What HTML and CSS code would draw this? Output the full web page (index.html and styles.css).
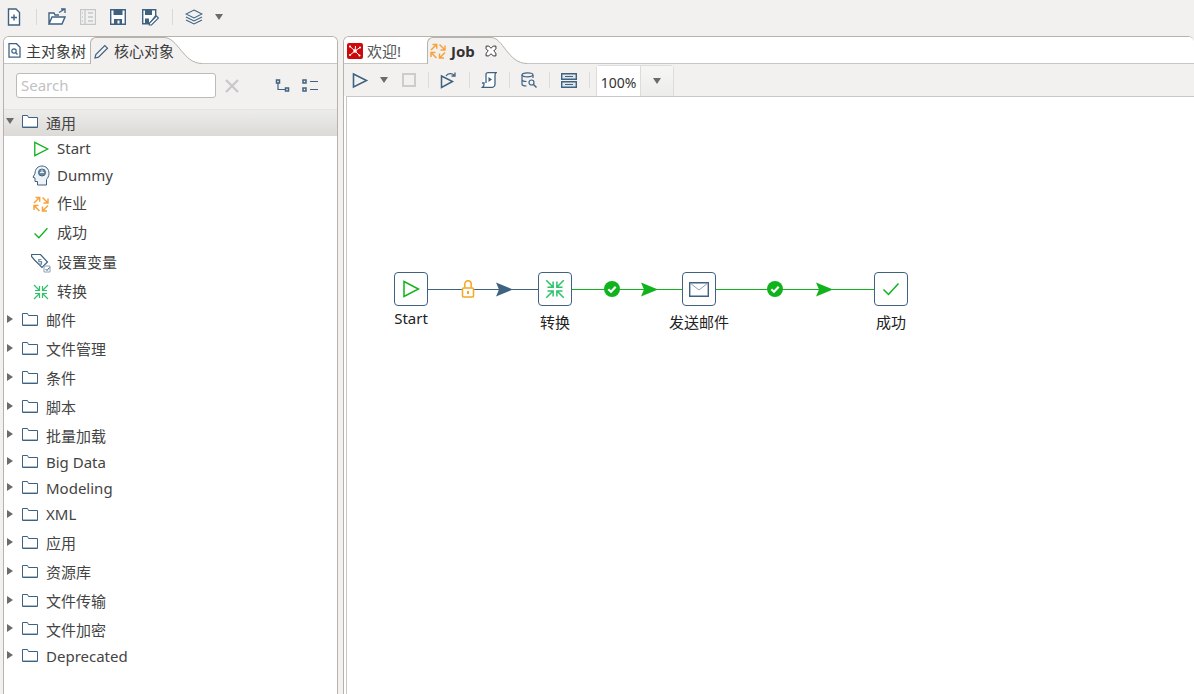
FILE: index.html
```html
<!DOCTYPE html>
<html lang="zh">
<head>
<meta charset="utf-8">
<title>Job</title>
<link rel="stylesheet" href="styles.css">
</head>
<body>
<svg class="defs" width="0" height="0">
  <defs>
    <symbol id="folder" viewBox="0 0 16 14"><path d="M.5 1.500h5l1 2h9v10H.5z" fill="#fff" stroke="#3f6281"/><path d="M1 12.500h14" stroke="#a9bdcd"/></symbol>
    <symbol id="open" viewBox="0 0 10 10"><path d="M1 2h8L5 8z" fill="#6b6b6b"/></symbol>
    <symbol id="closed" viewBox="0 0 10 10"><path d="M2 1v8l6-4z" fill="#6b6b6b"/></symbol>
    <symbol id="arrows" viewBox="0 0 16 16"><g fill="none" stroke="currentColor" stroke-width="1.500"><path d="M1 7l5-5M2.500 1.500h4.200v4.200"/><path d="M9.500 1.500l5 5M15 2.500v4.500h-4.500"/><path d="M15 9.500l-5 5M14 15H9.500v-4.500"/><path d="M6.500 15l-5-5M1 14V9.500h4.500"/></g></symbol>
    <symbol id="compress" viewBox="0 0 16 16"><g fill="none" stroke="currentColor" stroke-width="1.200"><path d="M1 1l5 5M6.500 2v4.500H2"/><path d="M15 1l-5 5M9.500 2v4.500H14"/><path d="M1 15l5-5M6.500 14V9.500H2"/><path d="M15 15l-5-5M9.500 14V9.500H14"/></g></symbol>
    <symbol id="play" viewBox="0 0 18 18"><path d="M2 1.500l14.500 7.500L2 16.500z" fill="none" stroke="currentColor" stroke-width="1.500"/></symbol>
    <symbol id="check" viewBox="0 0 18 14"><path d="M1.500 7.500l5 5L16.500 1.500" fill="none" stroke="currentColor" stroke-width="1.500"/></symbol>
    <symbol id="okdot" viewBox="0 0 16 16"><circle cx="8" cy="8" r="8" fill="#10b31c"/><path d="M4.300 8.200l2.700 2.600 4.700-5" fill="none" stroke="#fff" stroke-width="2.200"/></symbol>
  </defs>
</svg>

<header class="topbar">
  <svg class="ti" viewBox="0 0 18 20" width="18" height="20"><path d="M3.500 2h7.500l3.500 3.500V18h-11z" fill="#fff" stroke="#3f6281" stroke-width="1.400"/><path d="M9 7.500v6M6 10.500h6" stroke="#3f6281" stroke-width="1.400"/></svg>
  <span class="sep"></span>
  <svg class="ti gap-a" viewBox="0 0 18 18" width="18" height="18"><path d="M1 16V5h5l1 2h4M1 16l3-7h13l-3 7z" fill="#fff" stroke="#3f6281" stroke-width="1.400"/><path d="M11 4.500l5-3M13 1h4v4" fill="none" stroke="#3f6281" stroke-width="1.300"/></svg>
  <svg class="ti gap-b" viewBox="0 0 16 16" width="16" height="16"><path d="M.5.500h15v15H.5zM5 .5v15M8 4h5M8 8h5M8 12h5M2 4h1M2 8h1M2 12h1" fill="none" stroke="#c4c7c9" stroke-width="1.300"/></svg>
  <svg class="ti gap-b" viewBox="0 0 16 16" width="16" height="16"><path d="M.7.700h14.600v14.600H.7z" fill="#fff" stroke="#3f6281" stroke-width="1.400"/><path d="M3.500 1h9v5h-9zM4 10h8v5H4z" fill="#3f6281"/><path d="M7.500 11.500h2v3h-2z" fill="#fff"/></svg>
  <svg class="ti gap-c" viewBox="0 0 18 18" width="18" height="18"><path d="M1.700 1.700h13v6l-6 8h-7z" fill="#fff" stroke="#3f6281" stroke-width="1.400"/><path d="M4 2h7v5H4zM4 10.500h4v5H4z" fill="#3f6281"/><path d="M8.500 15l7-7 2 2-7 7h-2.200z" fill="#fff" stroke="#3f6281" stroke-width="1.200"/></svg>
  <span class="sep sep-b"></span>
  <svg class="ti gap-d" viewBox="0 0 18 16" width="18" height="16"><path d="M9 1l8 4-8 4-8-4z" fill="none" stroke="#3f6281" stroke-width="1.100"/><path d="M1 8l8 4 8-4M1 11l8 4 8-4" fill="none" stroke="#3f6281" stroke-width="1.100"/></svg>
  <svg class="menu-caret" width="10" height="10"><use href="#open"/></svg>
</header>

<main class="workspace">
  <section class="panel left">
    <div class="tabs">
      <div class="tab plain t-main">
        <svg width="13" height="15" viewBox="0 0 13 15"><path d="M1 .7h7.500l3.500 3.500v10H1z" fill="#fff" stroke="#3f6281" stroke-width="1.300"/><circle cx="6" cy="8" r="2.200" fill="none" stroke="#3f6281" stroke-width="1.200"/><path d="M7.500 9.500l2 2" stroke="#3f6281" stroke-width="1.200"/></svg>
        <span>主对象树</span>
      </div>
      <div class="tab active t-core">
        <svg width="15" height="15" viewBox="0 0 15 15"><path d="M1 14l.8-3.500L10.800 1.500l2.700 2.700-9 9z" fill="none" stroke="#3f6281" stroke-width="1.200"/></svg>
        <span>核心对象</span>
      </div>
      <svg class="curve" width="38" height="27" viewBox="0 0 38 27"><path d="M0 0C14 0 20 26 37 26H38V27H0z" fill="#f2f1f0"/><path d="M0 .5C14 .5 19 26.500 38 26.500" fill="none" stroke="#b5b3ac"/></svg>
    </div>
    <div class="search-row">
      <div class="search">Search</div>
      <svg class="clear" width="14" height="14" viewBox="0 0 14 14"><path d="M1 1l12 12M13 1L1 13" stroke="#c8c8c8" stroke-width="2.200"/></svg>
      <svg class="s1" width="15" height="14" viewBox="0 0 15 14"><path d="M1.500 1h3v3h-3zM10.500 9h3v3h-3z" fill="none" stroke="#3f6281" stroke-width="1.500"/><path d="M3 4v6.500h7" fill="none" stroke="#3f6281" stroke-width="1.200"/></svg>
      <svg class="s2" width="16" height="14" viewBox="0 0 16 14"><path d="M1 1h3v3H1zM1 9h3v3H1z" fill="none" stroke="#3f6281" stroke-width="1.500"/><path d="M8 2.500h8M8 10.500h8" stroke="#3f6281" stroke-width="1.200"/></svg>
    </div>
    <ul class="tree">
      <li class="node selected h26"><svg class="tw" width="10" height="10"><use href="#open"/></svg><svg class="fd" width="16" height="14"><use href="#folder"/></svg><span>通用</span></li>
      <li class="leaf h26"><svg class="li green" width="16" height="16"><use href="#play"/></svg><span>Start</span></li>
      <li class="leaf h27"><svg class="li" width="18" height="21" viewBox="0 0 18 21"><path d="M5.500 20v-3.500H3v-3.500l-2-.8L3 8.500C3 4 6 1 10 1c4 0 7 3 7 7.500 0 3-1.500 4.500-2.500 6V20z" fill="#eef3f7" stroke="#3f6281"/><circle cx="10" cy="7.500" r="3.500" fill="#6f8ba3" stroke="#3f6281"/><path d="M8 7.500h4M10 4.500v3" stroke="#eef3f7"/></svg><span>Dummy</span></li>
      <li class="leaf h29"><svg class="li orange" width="16" height="16"><use href="#arrows"/></svg><span>作业</span></li>
      <li class="leaf h30"><svg class="li green" width="16" height="12"><use href="#check"/></svg><span>成功</span></li>
      <li class="leaf h29"><svg class="li wide" width="20" height="20" viewBox="0 0 20 20"><path d="M.7 1.500h8.800l7 7.500-5.500 5.500-7.500-7.500-3-3.500z" fill="#fff" stroke="#3f6281" stroke-width="1.200"/><path d="M10.500 6.500H7.800v2.200h2.700v2.500H7.500" fill="none" stroke="#6f8ba3" stroke-width="1.200"/><path d="M13 13h6v6h-6z" fill="#fff" stroke="#8aa2b5"/><path d="M14.500 16l1.500 1.500 2.500-3" fill="none" stroke="#3f6281"/></svg><span>设置变量</span></li>
      <li class="leaf h29"><svg class="li mint" width="16" height="16"><use href="#compress"/></svg><span>转换</span></li>
      <li class="node h29"><svg class="tw" width="10" height="10"><use href="#closed"/></svg><svg class="fd" width="16" height="14"><use href="#folder"/></svg><span>邮件</span></li>
      <li class="node h29"><svg class="tw" width="10" height="10"><use href="#closed"/></svg><svg class="fd" width="16" height="14"><use href="#folder"/></svg><span>文件管理</span></li>
      <li class="node h29"><svg class="tw" width="10" height="10"><use href="#closed"/></svg><svg class="fd" width="16" height="14"><use href="#folder"/></svg><span>条件</span></li>
      <li class="node h29"><svg class="tw" width="10" height="10"><use href="#closed"/></svg><svg class="fd" width="16" height="14"><use href="#folder"/></svg><span>脚本</span></li>
      <li class="node h28"><svg class="tw" width="10" height="10"><use href="#closed"/></svg><svg class="fd" width="16" height="14"><use href="#folder"/></svg><span>批量加载</span></li>
      <li class="node lat h26"><svg class="tw" width="10" height="10"><use href="#closed"/></svg><svg class="fd" width="16" height="14"><use href="#folder"/></svg><span>Big Data</span></li>
      <li class="node lat h26"><svg class="tw" width="10" height="10"><use href="#closed"/></svg><svg class="fd" width="16" height="14"><use href="#folder"/></svg><span>Modeling</span></li>
      <li class="node lat h27"><svg class="tw" width="10" height="10"><use href="#closed"/></svg><svg class="fd" width="16" height="14"><use href="#folder"/></svg><span>XML</span></li>
      <li class="node h29"><svg class="tw" width="10" height="10"><use href="#closed"/></svg><svg class="fd" width="16" height="14"><use href="#folder"/></svg><span>应用</span></li>
      <li class="node h29"><svg class="tw" width="10" height="10"><use href="#closed"/></svg><svg class="fd" width="16" height="14"><use href="#folder"/></svg><span>资源库</span></li>
      <li class="node h29"><svg class="tw" width="10" height="10"><use href="#closed"/></svg><svg class="fd" width="16" height="14"><use href="#folder"/></svg><span>文件传输</span></li>
      <li class="node h28"><svg class="tw" width="10" height="10"><use href="#closed"/></svg><svg class="fd" width="16" height="14"><use href="#folder"/></svg><span>文件加密</span></li>
      <li class="node lat h26"><svg class="tw" width="10" height="10"><use href="#closed"/></svg><svg class="fd" width="16" height="14"><use href="#folder"/></svg><span>Deprecated</span></li>
    </ul>
  </section>

  <section class="panel right">
    <div class="tabs">
      <div class="tab plain t-welcome">
        <svg width="16" height="16" viewBox="0 0 16 16"><rect width="16" height="16" rx="2" fill="#cc0a0a"/><path d="M8 8L3 3.500M8 8l5-3.500M8 8l-5 4M8 8l4.500 4.500M8 8l.5-5" stroke="#fff" stroke-width="1"/><circle cx="8" cy="8" r="1.800" fill="#fff"/><circle cx="3" cy="3.500" r="1" fill="#fff"/><circle cx="13" cy="4.500" r="1" fill="#fff"/><circle cx="3" cy="12" r="1" fill="#fff"/><circle cx="12.500" cy="12.500" r="1" fill="#fff"/></svg>
        <span>欢迎!</span>
      </div>
      <div class="tab active t-job">
        <svg class="orange" width="16" height="16"><use href="#arrows"/></svg>
        <b>Job</b>
        <svg class="close" width="12" height="12" viewBox="0 0 11 11"><path d="M1 1h2.500l2 2 2-2H10v2.500l-2 2 2 2V10H7.500l-2-2-2 2H1V7.500l2-2-2-2z" fill="#fff" stroke="#333" stroke-width=".9"/></svg>
      </div>
      <svg class="curve" width="36" height="27" viewBox="0 0 36 27"><path d="M0 0C12 0 18 26 35 26H36V27H0z" fill="#f2f1f0"/><path d="M0 .5C12 .5 17 26.500 36 26.500" fill="none" stroke="#b5b3ac"/></svg>
    </div>
    <div class="job-tools">
      <svg class="jt play" width="17" height="17" viewBox="0 0 17 17"><path d="M1.500 2l13 6.500-13 6.500z" fill="none" stroke="#3f6281" stroke-width="1.600"/></svg>
      <svg class="jt caret" width="10" height="10"><use href="#open"/></svg>
      <span class="stop"></span>
      <span class="jsep"></span>
      <svg class="jt" width="17" height="17" viewBox="0 0 17 17"><path d="M1.500 4l11 5.500-11 6z" fill="none" stroke="#3f6281" stroke-width="1.500"/><path d="M6 4c2-3 6-3 8-1M15 .5V4h-3.500" fill="none" stroke="#3f6281" stroke-width="1.300"/></svg>
      <span class="jsep"></span>
      <svg class="jt" width="16" height="16" viewBox="0 0 16 16"><path d="M5 2.500C5 1 6 .7 7 .7h8c-1 .8-1 1.500-1 2.800V12c0 2-1.500 3.300-2.500 3.300H1.500c1-.8 1.500-1.500 1.500-2.800V11H1M5 2.500V11" fill="#fff" stroke="#3f6281" stroke-width="1.300"/><path d="M7.500 5l3.500 2.500-3.500 2.500z" fill="#3f6281"/></svg>
      <span class="jsep"></span>
      <svg class="jt" width="16" height="16" viewBox="0 0 16 16"><ellipse cx="6.500" cy="2.800" rx="5.500" ry="2" fill="none" stroke="#3f6281" stroke-width="1.200"/><path d="M1 3v9c0 1 2 2 4.500 2M12 3v3M1 7.500c0 1 2 2 4.500 2" fill="none" stroke="#3f6281" stroke-width="1.200"/><circle cx="10.500" cy="10.500" r="2.500" fill="none" stroke="#3f6281" stroke-width="1.200"/><path d="M12.500 12.500l3 3" stroke="#3f6281" stroke-width="1.400"/></svg>
      <span class="jsep"></span>
      <svg class="jt" width="16" height="15" viewBox="0 0 16 15"><path d="M.7.700h14.600v5.600H.7zM.7 8.700h14.600v5.600H.7z" fill="#dfe7ed" stroke="#3f6281" stroke-width="1.400"/><path d="M4 3.500h8M4 11.500h8" stroke="#3f6281" stroke-width="1.200"/></svg>
      <span class="jsep jsep-z"></span>
      <div class="zoom-box"><span class="zoom-val">100%</span><span class="zoom-btn"><svg width="10" height="10"><use href="#open"/></svg></span></div>
    </div>
    <div class="canvas">
      <svg class="links" width="848" height="597" viewBox="0 0 848 597">
        <path d="M82 192.500H192" stroke="#3f6281" stroke-width="1.200"/>
        <path d="M150 185.500l17 7-17 7 3-7z" fill="#3f6281"/>
        <path d="M226 192.500H336M370 192.500H528" stroke="#10b31c" stroke-width="1.200"/>
        <path d="M295 185.500l17 7-17 7 3-7zM470 185.500l17 7-17 7 3-7z" fill="#10b31c"/>
        <rect x="116.500" y="191" width="11" height="9" rx="1" fill="#fff" stroke="#f5a623" stroke-width="1.500"/>
        <path d="M118.800 190.500V187a3.200 3.200 0 0 1 6.400 0v3.500" fill="none" stroke="#f5a623" stroke-width="1.500"/>
        <path d="M121 194h2v3h-2z" fill="#f5a623"/>
      </svg>
      <svg class="ok ok1" width="16" height="16"><use href="#okdot"/></svg>
      <svg class="ok ok2" width="16" height="16"><use href="#okdot"/></svg>

      <div class="job-node n-start"><div class="box"><svg class="green" width="18" height="18"><use href="#play"/></svg></div><label>Start</label></div>
      <div class="job-node n-conv"><div class="box"><svg class="mint" width="20" height="20"><use href="#compress"/></svg></div><label>转换</label></div>
      <div class="job-node n-mail"><div class="box"><svg width="20" height="15" viewBox="0 0 20 15"><path d="M.7.700h18.600v13.600H.7z" fill="#fff" stroke="#3f6281" stroke-width="1.400"/><path d="M1 1l9 7 9-7" fill="none" stroke="#8aa2b5"/></svg></div><label>发送邮件</label></div>
      <div class="job-node n-ok"><div class="box"><svg class="green" width="18" height="14"><use href="#check"/></svg></div><label>成功</label></div>
    </div>
  </section>
</main>
</body>
</html>
```
FILE: styles.css
```css
* { box-sizing: border-box; }
html, body { margin: 0; height: 100%; overflow: hidden; }
body {
  width: 1194px; height: 694px; background: #f2f1f0; color: #3c3c3c;
  font: 15px/1.2 "Noto Sans", "Noto Sans CJK SC", sans-serif;
  display: flex; flex-direction: column;
}
.defs { position: absolute; }
svg { display: block; flex: none; }
.green { color: #10b31c; }
.orange { color: #f5a33b; }
.mint { color: #2bc26a; }

.topbar { height: 36px; display: flex; align-items: center; padding: 0 0 3px 5px; flex: none; }
.sep { width: 1px; height: 16px; background: #d8d8d8; margin-left: 13px; }
.sep-b { margin-left: 13px; }
.gap-a { margin-left: 11px; }
.gap-b { margin-left: 14px; }
.gap-c { margin-left: 15px; }
.gap-d { margin-left: 12px; }
.menu-caret { margin-left: 11px; }

.workspace { flex: 1; display: flex; min-height: 0; padding-left: 3px; }
.panel { border: 1px solid #b5b3ac; border-bottom: 0; border-radius: 6px 6px 0 0; background: #fff; display: flex; flex-direction: column; overflow: hidden; }
.left { width: 335px; }
.right { width: 851px; margin-left: 5px; border-right: 0; }

.tabs { height: 27px; display: flex; align-items: stretch; flex: none; background: #fff; position: relative; box-shadow: inset 0 -1px 0 #c8c6c0; }
.tab { display: flex; align-items: center; gap: 5px; }
.tab.active { background: #f2f1f0; border-left: 1px solid #b5b3ac; border-top: 1px solid #b5b3ac; border-radius: 6px 0 0 0; }
.tab span, .tab b { font-size: 15px; white-space: nowrap; position: relative; z-index: 1; }
.t-main { width: 86px; padding-left: 4px; }
.t-core { width: 74px; padding-left: 3px; gap: 5px; }
.t-welcome { width: 83px; padding-left: 3px; gap: 4px; color: #555; }
.t-job { width: 64px; padding-left: 2px; gap: 5px; }
.t-job b { color: #333; }
.close { margin-left: 5px; position: relative; z-index: 1; }

.search-row { height: 46px; display: flex; align-items: center; padding: 0 0 2px 12px; background: #f2f1f0; border-bottom: 1px solid #e4e3e0; flex: none; }
.search { width: 200px; height: 25px; border: 1px solid #bdbbb5; border-radius: 3px; background: #fff; color: #c2c2c2; font-size: 15px; line-height: 23px; padding-left: 4px; }
.clear { margin-left: 9px; }
.s1 { margin-left: 36px; }
.s2 { margin-left: 12px; }

.tree { list-style: none; margin: 0; padding: 0; flex: 1; background: #fff; }
.tree li { display: flex; align-items: center; white-space: nowrap; color: #444; font-size: 15px; }
.h26 { height: 26px; } .h27 { height: 27px; } .h28 { height: 28px; } .h29 { height: 29px; } .h30 { height: 30px; }
.selected { background: linear-gradient(#ececea, #dcdad7); }
.node { padding-left: 1px; }
.tw { margin-bottom: 4px; }
.fd { margin-left: 7px; margin-bottom: 4px; }
.node span { margin-left: 8px; padding-bottom: 1px; }
.node.lat span { padding-bottom: 3px; }
.leaf { padding-left: 27px; position: relative; }
.leaf .li { width: 20px; }
.leaf span { position: absolute; left: 53px; top: 50%; transform: translateY(calc(-50% - 1.5px)); }

.job-tools { height: 32px; display: flex; align-items: center; padding-left: 8px; background: #f2f1f0; flex: none; }
.jt.caret { margin-left: 10px; }
.stop { width: 14px; height: 14px; border: 2px solid #cccccc; margin-left: 13px; flex: none; }
.jsep { width: 1px; height: 16px; background: #dcdcdc; margin: 0 11px 0 12px; flex: none; }
.jsep-z { margin-right: 6px; }
.zoom-box { width: 78px; height: 32px; background: #f6f6f5; border: 1px solid #dcdcdc; border-bottom: 0; border-radius: 4px 4px 0 0; display: flex; margin-top: 1px; }
.zoom-val { width: 44px; background: #fff; border-right: 1px solid #dcdcdc; text-align: center; line-height: 34px; font-size: 14px; color: #333; }
.zoom-btn { flex: 1; display: flex; align-items: center; justify-content: center; background: linear-gradient(#f6f6f5, #ececea); }

.canvas { flex: 1; position: relative; background: #fff; border-top: 1px solid #c9c8c3; border-left: 1px solid #c9c8c3; margin-left: 2px; }
.links { position: absolute; left: -1px; top: 0; }
.ok { position: absolute; top: 184px; }
.ok1 { left: 257px; }
.ok2 { left: 420px; }
.job-node { position: absolute; top: 175px; width: 80px; display: flex; flex-direction: column; align-items: center; }
.box { width: 34px; height: 34px; background: #fff; border: 1px solid #3f6281; border-radius: 4px; display: flex; align-items: center; justify-content: center; }
.job-node label { margin-top: 7px; color: #222; font-size: 15px; white-space: nowrap; }
.n-start label { margin-top: 3px; }
.n-start { left: 24px; }
.n-conv { left: 168px; }
.n-mail { left: 312px; }
.n-ok { left: 504px; }
```
